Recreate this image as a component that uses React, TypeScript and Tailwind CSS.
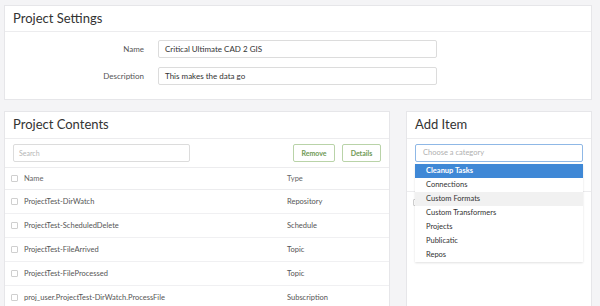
import React from "react"

const rows = [
  { name: "ProjectTest-DirWatch", type: "Repository" },
  { name: "ProjectTest-ScheduledDelete", type: "Schedule" },
  { name: "ProjectTest-FileArrived", type: "Topic" },
  { name: "ProjectTest-FileProcessed", type: "Topic" },
  { name: "proj_user.ProjectTest-DirWatch.ProcessFile", type: "Subscription" },
]

const categories = [
  "Cleanup Tasks",
  "Connections",
  "Custom Formats",
  "Custom Transformers",
  "Projects",
  "Publicatic",
  "Repos",
]

function Checkbox() {
  return <span className="inline-block w-[7px] h-[7px] border border-[#cfcfcf] rounded-[1px] bg-white" />
}

export default function App() {
  return (
    <div
      className="w-[600px] h-[306px] overflow-hidden bg-[#f4f4f6] pt-[5px] pl-[4px] pr-[8px] text-[#444]"
      style={{ fontFamily: "Lato, 'Open Sans', sans-serif" }}
    >
      {/* Project Settings */}
      <div className="bg-white border border-[#e6e6e9] h-[95px]">
        <div className="h-[26px] border-b border-[#ececee] flex items-center pl-[8px] text-[13px] text-[#333]">
          Project Settings
        </div>
        <div className="flex flex-col gap-[9px] pt-[8px]">
          <div className="flex items-center">
            <span className="w-[139px] text-right text-[8px] text-[#555]">Name</span>
            <div className="ml-[14px] w-[279px] h-[18px] border border-[#dcdcdc] rounded-[2px] flex items-center px-[6px] text-[8px] text-[#333]">
              Critical Ultimate CAD 2 GIS
            </div>
          </div>
          <div className="flex items-center">
            <span className="w-[139px] text-right text-[8px] text-[#555]">Description</span>
            <div className="ml-[14px] w-[279px] h-[18px] border border-[#dcdcdc] rounded-[2px] flex items-center px-[6px] text-[8px] text-[#333]">
              This makes the data go
            </div>
          </div>
        </div>
      </div>

      <div className="flex gap-[16px] mt-[11px]">
        {/* Project Contents */}
        <div className="w-[386px] h-[200px] bg-white border border-[#e6e6e9]">
          <div className="h-[27px] border-b border-[#ececee] flex items-center pl-[8px] text-[13px] text-[#333]">
            Project Contents
          </div>
          <div className="flex items-center h-[29px] px-[8px] border-b border-[#ececee]">
            <div className="w-[177px] h-[18px] border border-[#dcdcdc] rounded-[2px] flex items-center px-[5px] text-[7px] text-[#b5b5b5]">
              Search
            </div>
            <div className="ml-auto flex gap-[7px]">
              <button className="w-[42px] h-[18px] border border-[#b9d3a8] rounded-[2px] text-[7px] font-bold text-[#6f9a55] bg-white">
                Remove
              </button>
              <button className="w-[39px] h-[18px] border border-[#b9d3a8] rounded-[2px] text-[7px] font-bold text-[#6f9a55] bg-white">
                Details
              </button>
            </div>
          </div>
          <div className="flex items-center h-[22px] border-b border-[#ececee] text-[7.5px] text-[#666]">
            <span className="w-[19px] flex justify-center">
              <Checkbox />
            </span>
            <span className="w-[263px]">Name</span>
            <span>Type</span>
          </div>
          {rows.map((r) => (
            <div key={r.name} className="flex items-center h-[24px] border-b border-[#f0f0f2] text-[7.5px] text-[#555]">
              <span className="w-[19px] flex justify-center">
                <Checkbox />
              </span>
              <span className="w-[263px]">{r.name}</span>
              <span>{r.type}</span>
            </div>
          ))}
        </div>

        {/* Add Item */}
        <div className="w-[186px] h-[200px] bg-white border border-[#e6e6e9] relative">
          <div className="h-[27px] border-b border-[#ececee] flex items-center pl-[8px] text-[13px] text-[#333]">
            Add Item
          </div>
          <div className="px-[8px] pt-[5px]">
            <div className="h-[18px] border border-[#8fb8e6] rounded-[2px] flex items-center px-[7px] text-[7.5px] text-[#b0b0b0]">
              Choose a category
            </div>
          </div>
          <div className="h-[30px] border-b border-[#ececee]" />
          <div className="flex items-center h-[20px] px-[6px] text-[#ccc]">
            <Checkbox />
          </div>
          <div className="absolute left-[8px] top-[52px] w-[168px] bg-white shadow-[0_1px_2px_rgba(0,0,0,0.12)] text-[7.5px] text-[#333]">
            {categories.map((c, i) => (
              <div
                key={c}
                className={
                  i === 0
                    ? "h-[14px] flex items-center px-[11px] bg-[#3f88d6] text-white font-bold"
                    : i === 2
                    ? "h-[14px] flex items-center px-[11px] bg-[#f1f1f1]"
                    : "h-[14px] flex items-center px-[11px]"
                }
              >
                {c}
              </div>
            ))}
          </div>
        </div>
      </div>
    </div>
  )
}
